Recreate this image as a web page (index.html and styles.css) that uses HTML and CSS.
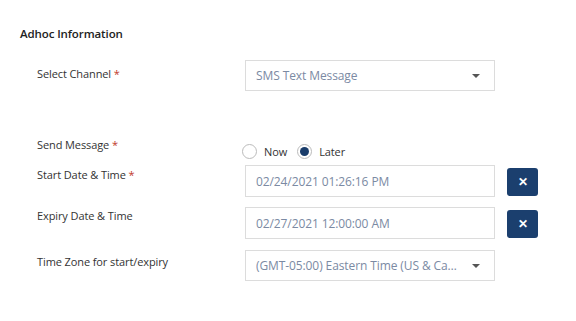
FILE: index.html
```html
<!DOCTYPE html>
<html>
  <head>
    <meta charset="UTF-8">
    <title>Adhoc Information</title>
    <link rel="stylesheet" href="styles.css">
  </head>
  <body>
    <div class="section">
      <h3>Adhoc Information</h3>
      <div class="row row-channel">
        <label class="label">Select Channel <span class="req">*</span></label>
        <div class="select">
          <span class="value">SMS Text Message</span>
          <span class="caret"></span>
        </div>
      </div>
      <div class="row row-send">
        <label class="label">Send Message <span class="req">*</span></label>
        <div class="radios">
          <span class="radio"></span><span class="opt">Now</span>
          <span class="radio checked"></span><span class="opt">Later</span>
        </div>
      </div>
      <div class="row row-start">
        <label class="label">Start Date &amp; Time <span class="req">*</span></label>
        <div class="input"><span class="value">02/24/2021 01:26:16 PM</span></div>
        <button class="clear">&#x2715;</button>
      </div>
      <div class="row row-expiry">
        <label class="label">Expiry Date &amp; Time</label>
        <div class="input"><span class="value">02/27/2021 12:00:00 AM</span></div>
        <button class="clear">&#x2715;</button>
      </div>
      <div class="row row-zone">
        <label class="label">Time Zone for start/expiry</label>
        <div class="select">
          <span class="value">(GMT-05:00) Eastern Time (US &amp; Canada)</span>
          <span class="caret"></span>
        </div>
      </div>
    </div>
  </body>
</html>
```

FILE: styles.css
```css
body { background: #fff; color: #333; font-family: "Open Sans", "Noto Sans", sans-serif; font-size: 11px; letter-spacing: -0.1px; margin: 0 }
h3 { color: #222; font-size: 11.5px; font-weight: 600; margin: 0 0 19px; padding-top: 26px }

.section { padding-left: 20px }
.row { align-items: flex-start; display: flex; padding-left: 17px }
.label { flex: 0 0 208px; line-height: 16px }
.req { color: #c0392b }

.row-channel .label { padding-top: 6px }
.row-send { margin-top: 46px }
.row-send .label { padding-top: 0 }
.row-start { margin-top: 6px }
.row-start .label { padding-top: 2px }
.row-expiry { margin-top: 10px }
.row-expiry .label { padding-top: 1px }
.row-zone { margin-top: 11px }
.row-zone .label { padding-top: 4px }

.select, .input { align-items: center; border: 1px solid #dcdcdc; box-sizing: border-box; display: flex; height: 32px; padding: 0 14px 0 10px; width: 250px }
.select { height: 31px }
.value { color: #7b8aa3; flex: 1; font-size: 12px; overflow: hidden; text-overflow: ellipsis; white-space: nowrap }
.select .value { padding-right: 10px }
.caret { border-left: 4px solid transparent; border-right: 4px solid transparent; border-top: 4px solid #555; height: 0; width: 0 }

.radios { align-items: center; display: flex; padding-top: 7px }
.radio { border: 1px solid #bbb; border-radius: 50%; box-sizing: border-box; height: 15px; margin: 0 7px 0 -3px; position: relative; width: 15px }
.radio.checked { margin-left: 0 }
.radio.checked::after { background: #1a3d6b; border-radius: 50%; content: ""; height: 9px; left: 2px; position: absolute; top: 2px; width: 9px }
.opt { margin-right: 10px }

.clear { align-items: center; background: #1b3f6e; border: 0; border-radius: 3px; color: #fff; display: flex; font-size: 12px; font-weight: 700; height: 28px; justify-content: center; margin: 3px 0 0 12px; padding: 0; width: 31px }
```
